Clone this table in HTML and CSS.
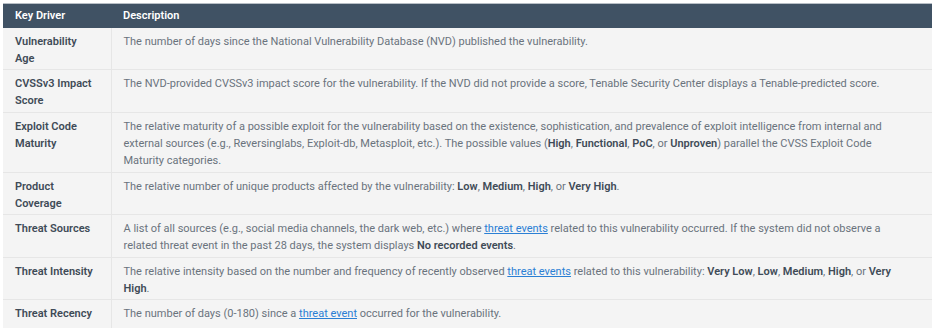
FILE: index.html
```html
<!DOCTYPE html>
<html lang="en">
  <head>
    <meta charset="UTF-8" />
    <title>Key Drivers</title>
    <link rel="stylesheet" href="styles.css">
  </head>
  <body>
    <table class="drivers">
      <thead>
        <tr>
          <th class="col-key">Key Driver</th>
          <th>Description</th>
        </tr>
      </thead>
      <tbody>
        <tr>
          <td class="col-key">Vulnerability Age</td>
          <td>The number of days since the National Vulnerability Database (NVD) published the vulnerability.</td>
        </tr>
        <tr>
          <td class="col-key">CVSSv3 Impact Score</td>
          <td>The NVD-provided CVSSv3 impact score for the vulnerability. If the NVD did not provide a score, Tenable Security Center displays a Tenable-predicted score.</td>
        </tr>
        <tr>
          <td class="col-key">Exploit Code Maturity</td>
          <td>The relative maturity of a possible exploit for the vulnerability based on the existence, sophistication, and prevalence of exploit intelligence from internal and external sources (e.g., Reversinglabs, Exploit-db, Metasploit, etc.). The possible values (<b>High</b>, <b>Functional</b>, <b>PoC</b>, or <b>Unproven</b>) parallel the CVSS Exploit Code Maturity categories.</td>
        </tr>
        <tr>
          <td class="col-key">Product Coverage</td>
          <td>The relative number of unique products affected by the vulnerability: <b>Low</b>, <b>Medium</b>, <b>High</b>, or <b>Very High</b>.</td>
        </tr>
        <tr>
          <td class="col-key">Threat Sources</td>
          <td>A list of all sources (e.g., social media channels, the dark web, etc.) where <a href="#">threat events</a> related to this vulnerability occurred. If the system did not observe a related threat event in the past 28 days, the system displays <b>No recorded events</b>.</td>
        </tr>
        <tr>
          <td class="col-key">Threat Intensity</td>
          <td>The relative intensity based on the number and frequency of recently observed <a href="#">threat events</a> related to this vulnerability: <b>Very Low</b>, <b>Low</b>, <b>Medium</b>, <b>High</b>, or <b>Very High</b>.</td>
        </tr>
        <tr>
          <td class="col-key">Threat Recency</td>
          <td>The number of days (0-180) since a <a href="#">threat event</a> occurred for the vulnerability.</td>
        </tr>
      </tbody>
    </table>
  </body>
</html>
```
FILE: styles.css
```css
* {
  box-sizing: border-box;
}
body {
  margin: 0;
  padding: 3px 4px 0 3px;
  background: #ffffff;
  font-family: "Roboto", "Liberation Sans", sans-serif;
  font-size: 11px;
  color: #6a737d;
}
.drivers {
  width: 929px;
  border-collapse: collapse;
  background: #f4f4f4;
  border-top: 1px solid #b8bfc6;
}
.drivers th {
  background: #405264;
  color: #ffffff;
  font-weight: 600;
  text-align: left;
  height: 24px;
  padding: 0 12px;
}
.drivers td {
  padding: 5px 20px 2px 12px;
  line-height: 17.3px;
  vertical-align: top;
  border-bottom: 1px solid #e6e6e6;
}
.drivers tr:last-child td {
  border-bottom: none;
  padding-bottom: 5px;
}
.drivers .col-key {
  width: 108px;
  padding-right: 14px;
  border-right: 1px solid #e6e6e6;
}
.drivers th.col-key {
  border-right: none;
}
td.col-key {
  font-weight: 600;
  color: #3f4b57;
}
.drivers b {
  font-weight: 600;
  color: #3f4b57;
}
.drivers a {
  color: #2b7fd4;
  text-decoration: underline;
}
```
